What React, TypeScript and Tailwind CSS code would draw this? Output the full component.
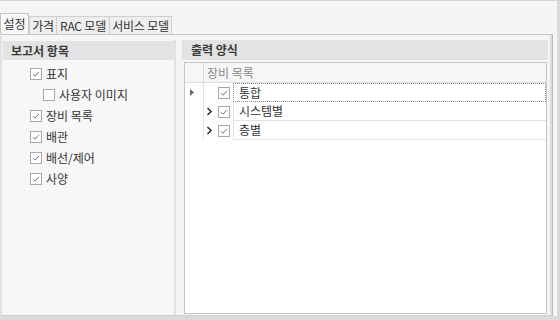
import React from "react";

const Check = ({ checked = true }: { checked?: boolean }) => (
  <span className="w-[12px] h-[12px] border border-[#a8a8a8] bg-white flex items-center justify-center shrink-0">
    {checked && (
      <svg width="8" height="8" viewBox="0 0 8 8">
        <path d="M1 4.2 L3 6.2 L7 1.8" fill="none" stroke="#777" strokeWidth="1" />
      </svg>
    )}
  </span>
);

const Chevron = () => (
  <svg width="7" height="9" viewBox="0 0 7 9">
    <path d="M1.5 1 L5 4.5 L1.5 8" fill="none" stroke="#333" strokeWidth="1.6" />
  </svg>
);

export default function App() {
  const tabs = [
    { label: "가격", w: "w-[28px]" },
    { label: "RAC 모델", w: "w-[54px]" },
    { label: "서비스 모델", w: "w-[63px]" },
  ];
  const items: { label: string; level: number; checked: boolean }[] = [
    { label: "표지", level: 0, checked: true },
    { label: "사용자 이미지", level: 1, checked: false },
    { label: "장비 목록", level: 0, checked: true },
    { label: "배관", level: 0, checked: true },
    { label: "배선/제어", level: 0, checked: true },
    { label: "사양", level: 0, checked: true },
  ];
  return (
    <div
      className="w-[560px] h-[320px] flex flex-col bg-[#f5f5f5] border-t border-t-[#d4d4d4] border-r-[3px] border-r-[#d9d9d9] border-b-4 border-b-[#dadada] text-[12px] text-[#333]"
      style={{ fontFamily: '"Noto Sans CJK KR", "Noto Sans", sans-serif' }}
    >
      <div className="h-[13px] shrink-0" />
      {/* tabs */}
      <div className="h-[20px] shrink-0 flex items-end relative z-10">
        <div className="w-[29px] h-[21px] bg-[#f8f8f8] border border-[#c4c4c4] border-b-0 flex items-center justify-center leading-none">
          설정
        </div>
        <div className="w-[1px]" />
        {tabs.map((t) => (
          <div
            key={t.label}
            className={`${t.w} h-[18px] bg-[#eeeeee] border border-[#cfcfcf] border-b-0 -ml-px first:ml-0 flex items-center justify-center leading-none tracking-[-0.2px]`}
          >
            {t.label}
          </div>
        ))}
      </div>
      {/* tab page */}
      <div className="flex-1 flex flex-col border-t border-t-[#c4c4c4] border-l-2 border-l-[#e2e2e2] border-r border-r-[#b9b9b9] mr-[4px] border-b border-b-[#cfcfcf]">
        <div className="flex-1 flex border-r-2 border-r-[#dcdcdc] pt-[5px] pl-px pr-[2px] bg-[#f5f5f5]">
          {/* left panel */}
          <div className="w-[173px] flex flex-col bg-[#f7f7f7] border-r-2 border-r-[#e2e2e2]">
            <div className="h-[19px] mt-px bg-[#e3e3e3] flex items-center pl-[8px] font-bold text-[#3a3a3a] leading-none">
              보고서 항목
            </div>
            <div className="pt-[3px] flex flex-col">
              {items.map((it) => (
                <div
                  key={it.label}
                  className={`h-[21px] flex items-center gap-[4px] ${it.level ? "pl-[40px]" : "pl-[27px]"}`}
                >
                  <Check checked={it.checked} />
                  <span className="leading-none">{it.label}</span>
                </div>
              ))}
            </div>
          </div>
          <div className="w-[6px]" />
          {/* right panel */}
          <div className="flex-1 flex flex-col">
            <div className="h-[20px] bg-[#e3e3e3] flex items-center pl-[9px] font-bold text-[#3a3a3a] leading-none">
              출력 양식
            </div>
            <div className="flex-1 flex pt-[2px] pl-[2px] pb-px pr-px">
              <div className="flex-1 bg-white border border-[#c6c6c6] flex flex-col">
                {/* header */}
                <div className="h-[20px] flex bg-[#f6f6f6] border-b border-[#dcdcdc]">
                  <div className="w-[19px] border-r border-[#d8d8d8]" />
                  <div className="flex items-center pl-[3px] text-[#8a8a8a] leading-none">
                    장비 목록
                  </div>
                </div>
                {/* rows */}
                <div className="flex">
                  <div className="w-[19px] border-r border-[#e4e4e4] flex flex-col">
                    <div className="h-[19px] flex items-center pl-[5px]">
                      <svg width="4" height="7" viewBox="0 0 4 7">
                        <path d="M0 0 L4 3.5 L0 7 Z" fill="#666" />
                      </svg>
                    </div>
                  </div>
                  <div className="flex-1 flex flex-col">
                    {[
                      { label: "통합", exp: false, focus: true },
                      { label: "시스템별", exp: true, focus: false },
                      { label: "층별", exp: true, focus: false },
                    ].map((r) => (
                      <div key={r.label} className="h-[19px] flex">
                        <div className="w-[29px] flex items-center">
                          <div className="w-[14px] flex justify-start pl-[2px]">
                            {r.exp && <Chevron />}
                          </div>
                          <Check />
                        </div>
                        <div
                          className={`flex-1 flex items-center pl-[5px] leading-none ${
                            r.focus
                              ? "border border-dotted border-[#8c8c8c]"
                              : "border-l border-b border-[#e3e3e3]"
                          }`}
                        >
                          {r.label}
                        </div>
                      </div>
                    ))}
                  </div>
                </div>
                <div className="flex-1 flex">
                  <div className="w-[19px]" />
                  <div className="w-[29px] h-[5px]" />
                </div>
              </div>
            </div>
          </div>
        </div>
      </div>
    </div>
  );
}
